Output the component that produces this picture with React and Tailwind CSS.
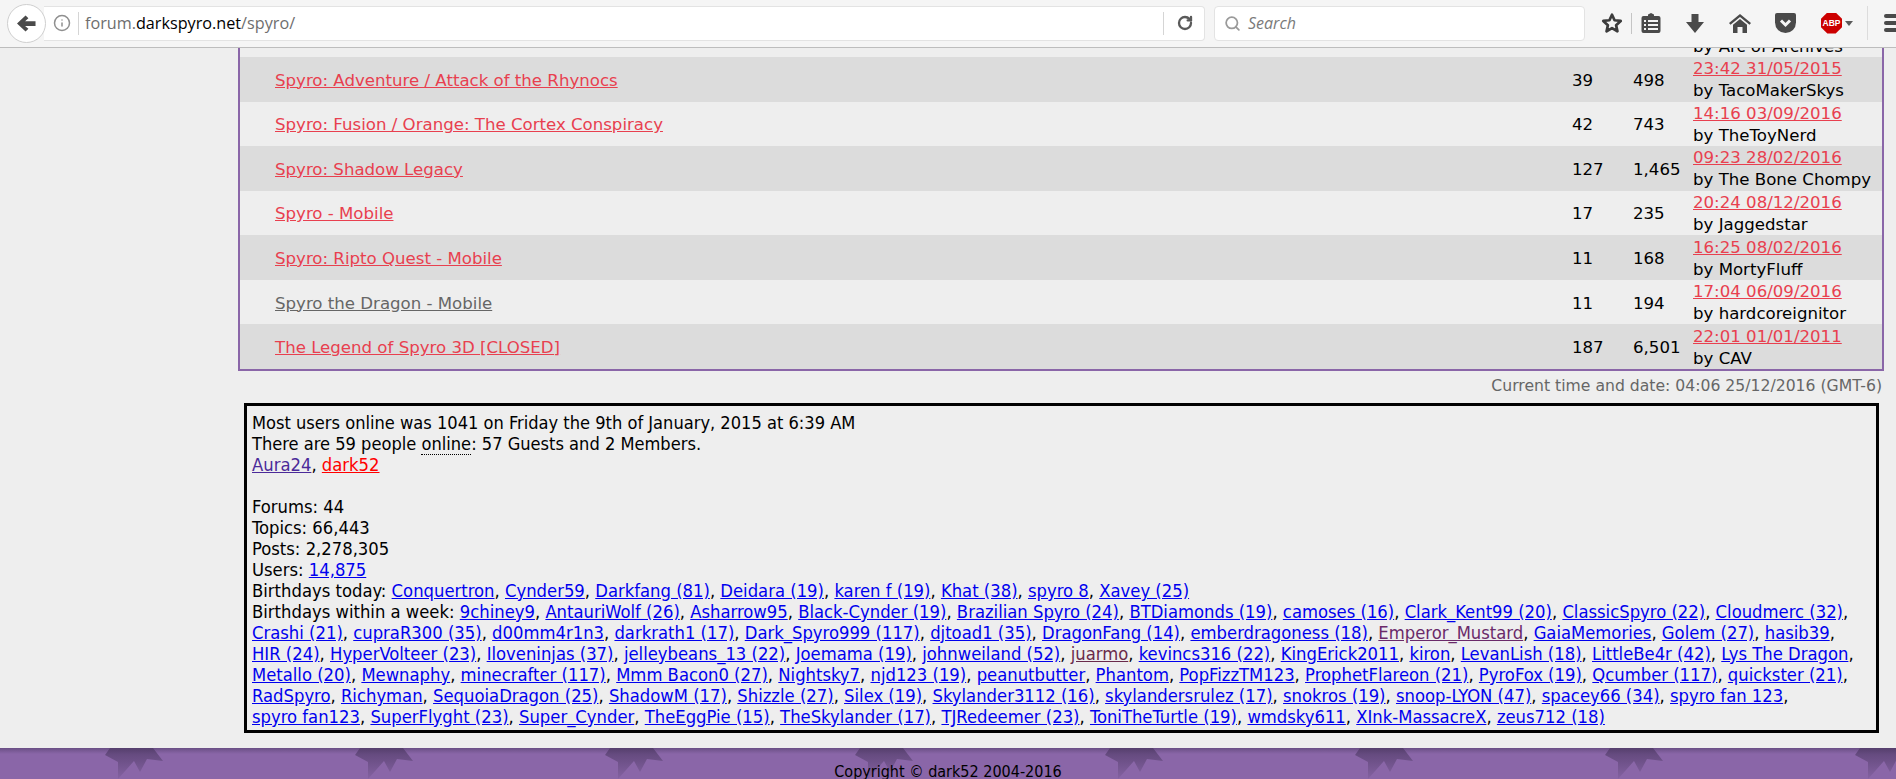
import { Info, Search, RotateCw } from "lucide-react";

const rows = [
  ["", "", "", "", "by Arc of Archives", false],
  ["Spyro: Adventure / Attack of the Rhynocs", "39", "498", "23:42 31/05/2015", "by TacoMakerSkys", true],
  ["Spyro: Fusion / Orange: The Cortex Conspiracy", "42", "743", "14:16 03/09/2016", "by TheToyNerd", false],
  ["Spyro: Shadow Legacy", "127", "1,465", "09:23 28/02/2016", "by The Bone Chompy", true],
  ["Spyro - Mobile", "17", "235", "20:24 08/12/2016", "by Jaggedstar", false],
  ["Spyro: Ripto Quest - Mobile", "11", "168", "16:25 08/02/2016", "by MortyFluff", true],
  ["Spyro the Dragon - Mobile", "11", "194", "17:04 06/09/2016", "by hardcoreignitor", false],
  ["The Legend of Spyro 3D [CLOSED]", "187", "6,501", "22:01 01/01/2011", "by CAV", true],
];

const today = ["Conquertron", "Cynder59", "Darkfang (81)", "Deidara (19)", "karen f (19)", "Khat (38)", "spyro 8", "Xavey (25)"];

const week = [
  ["9chiney9", "AntauriWolf (26)", "Asharrow95", "Black-Cynder (19)", "Brazilian Spyro (24)", "BTDiamonds (19)", "camoses (16)", "Clark_Kent99 (20)", "ClassicSpyro (22)", "Cloudmerc (32)"],
  ["Crashi (21)", "cupraR300 (35)", "d00mm4r1n3", "darkrath1 (17)", "Dark_Spyro999 (117)", "djtoad1 (35)", "DragonFang (14)", "emberdragoness (18)", "Emperor_Mustard", "GaiaMemories", "Golem (27)", "hasib39"],
  ["HIR (24)", "HyperVolteer (23)", "Iloveninjas (37)", "jelleybeans_13 (22)", "Joemama (19)", "johnweiland (52)", "juarmo", "kevincs316 (22)", "KingErick2011", "kiron", "LevanLish (18)", "LittleBe4r (42)", "Lys The Dragon"],
  ["Metallo (20)", "Mewnaphy", "minecrafter (117)", "Mmm Bacon0 (27)", "Nightsky7", "njd123 (19)", "peanutbutter", "Phantom", "PopFizzTM123", "ProphetFlareon (21)", "PyroFox (19)", "Qcumber (117)", "quickster (21)"],
  ["RadSpyro", "Richyman", "SequoiaDragon (25)", "ShadowM (17)", "Shizzle (27)", "Silex (19)", "Skylander3112 (16)", "skylandersrulez (17)", "snokros (19)", "snoop-LYON (47)", "spacey66 (34)", "spyro fan 123"],
  ["spyro fan123", "SuperFlyght (23)", "Super_Cynder", "TheEggPie (15)", "TheSkylander (17)", "TJRedeemer (23)", "ToniTheTurtle (19)", "wmdsky611", "XInk-MassacreX", "zeus712 (18)"],
];

function nameClass(name) {
  if (name === "Emperor_Mustard") return "text-[#6a2a6a] underline";
  if (name === "juarmo") return "text-[#6a2a4a] underline";
  return "text-[#0000ee] underline";
}

function NameList({ names, trailing }) {
  return (
    <>
      {names.map((name, i) => (
        <span key={name}>
          <a className={nameClass(name)}>{name}</a>
          {i < names.length - 1 || trailing ? ", " : ""}
        </span>
      ))}
    </>
  );
}

function Toolbar() {
  return (
    <div className="flex h-12 shrink-0 items-center overflow-hidden border-b border-[#bdbdbd] bg-[#f5f5f5] pb-[1px] pl-[7px]">
      <div className="z-10 flex h-[39px] w-[39px] shrink-0 items-center justify-center rounded-full border border-[#cfcfcf] bg-white">
        <svg viewBox="0 0 20 20" className="h-[19px] w-[19px]" fill="#4a4a4a">
          <path d="M0 10L9 1.500l3 3-3.500 3H19.500v5H8.500l3.500 3-3 3z" />
        </svg>
      </div>
      <div className="-ml-[2px] flex h-[35px] w-[1161px] shrink-0 items-center rounded-r-sm border border-l-0 border-[#e3e3e3] bg-white font-['Open_Sans',sans-serif] text-[16.2px]">
        <Info className="ml-[9px] h-[18px] w-[18px] text-[#8f8f8f]" />
        <div className="ml-[7px] h-[23px] w-px bg-[#d5d5d5]" />
        <span className="ml-[6px] text-[#6e6e6e]">
          forum.<span className="text-black">darkspyro.net</span>/spyro/
        </span>
        <div className="ml-auto flex items-center">
          <div className="h-[23px] w-px bg-[#d5d5d5]" />
          <RotateCw className="ml-[13px] mr-[11px] h-[16px] w-[16px] text-[#5a5a5a]" strokeWidth={3.5} />
        </div>
      </div>
      <div className="ml-[9px] flex h-[35px] w-[371px] shrink-0 items-center rounded-sm border border-[#e3e3e3] bg-white pl-[9px] font-['Open_Sans',sans-serif] text-[16px] italic text-[#7a7a7a]">
        <Search className="h-[17px] w-[17px] text-[#9a9a9a]" strokeWidth={2.5} />
        <span className="ml-[7px]">Search</span>
      </div>
      <svg viewBox="0 0 24 24" className="ml-[16px] h-[22px] w-[22px] shrink-0" fill="none" stroke="#3c3c3c" strokeWidth="3" strokeLinejoin="round">
        <path d="M12 3l2.800 6 6.700.8-5 4.600 1.400 6.600L12 17.600 6.100 21l1.400-6.600-5-4.600 6.700-.8z" />
      </svg>
      <div className="ml-[8px] h-[21px] w-px shrink-0 bg-[#c5c5c5]" />
      <svg viewBox="0 0 20 20" className="ml-[9px] h-[20px] w-[20px] shrink-0">
        <path d="M2.500 3H7V1.500L10 0l3 1.500V3h4.500A2 2 0 0 1 19.500 5v13a2 2 0 0 1-2 2h-15a2 2 0 0 1-2-2V5a2 2 0 0 1 2-2z" fill="#4a4a4a" />
        <path d="M3 7h2v2H3zM7 7h10v2H7zM3 11h2v2H3zM7 11h10v2H7zM3 15h2v2H3zM7 15h10v2H7z" fill="#f5f5f5" />
      </svg>
      <svg viewBox="0 0 18 19" className="ml-[25px] h-[19px] w-[18px] shrink-0" fill="#4a4a4a">
        <path d="M5.500 0h7v8H18l-9 11L0 8h5.500z" />
      </svg>
      <svg viewBox="0 0 22 19" className="ml-[25px] h-[19px] w-[22px] shrink-0" fill="#4a4a4a">
        <path d="M11 0L22 9l-1.500 1.800L11 3 1.500 10.800 0 9z" />
        <path d="M11 5l7 5.700V19h-4.500v-6h-5v6H4v-8.300z" />
      </svg>
      <svg viewBox="0 0 21 20" className="ml-[24px] h-[20px] w-[21px] shrink-0">
        <path d="M2 0h17a2 2 0 0 1 2 2v7.500a10.500 10.500 0 0 1-21 0V2a2 2 0 0 1 2-2z" fill="#4a4a4a" />
        <path d="M6 7.500l4.500 4.500L15 7.500" fill="none" stroke="#f5f5f5" strokeWidth="3" />
      </svg>
      <div className="ml-[25px] flex h-[21px] w-[21px] shrink-0 items-center justify-center bg-[#cc0000] font-['Liberation_Sans',sans-serif] text-[8.5px] font-bold leading-none text-white [clip-path:polygon(30%_0,70%_0,100%_30%,100%_70%,70%_100%,30%_100%,0_70%,0_30%)]">
        ABP
      </div>
      <div className="ml-[3px] h-0 w-0 shrink-0 border-x-[4.5px] border-t-[5px] border-x-transparent border-t-[#5a5a5a]" />
      <div className="ml-[14px] h-[34px] w-px shrink-0 bg-[#dcdcdc]" />
      <div className="ml-[16px] flex w-[20px] shrink-0 flex-col gap-[3px]">
        <div className="h-[4px] rounded-sm bg-[#4a4a4a]" />
        <div className="h-[4px] rounded-sm bg-[#4a4a4a]" />
        <div className="h-[4px] rounded-sm bg-[#4a4a4a]" />
      </div>
    </div>
  );
}

function ForumRow({ row }) {
  const [title, topics, posts, date, by, dark] = row;
  const grey = title === "Spyro the Dragon - Mobile";
  return (
    <div className={`flex h-[44.57px] items-center pt-[2px] ${dark ? "bg-[#dcdcdc]" : "bg-[#eeeeee]"}`}>
      <a className={`ml-[35px] flex-1 underline ${grey ? "text-[#666666]" : "text-[#e8404f]"}`}>{title}</a>
      <div className="w-[61px]">{topics}</div>
      <div className="w-[60px]">{posts}</div>
      <div className="w-[189px] leading-[22px]">
        <a className="block text-[#e8404f] underline">{date || "\u00A0"}</a>
        <div>{by}</div>
      </div>
    </div>
  );
}

function Dragon() {
  return (
    <svg viewBox="0 0 58 31" className="h-[31px] w-[58px]">
      <defs>
        <linearGradient id="dragonFade" x1="0" y1="0" x2="0" y2="1">
          <stop offset="0" stopColor="#4f3a66" stopOpacity="0.75" />
          <stop offset="1" stopColor="#4f3a66" stopOpacity="0.1" />
        </linearGradient>
      </defs>
      <path d="M0 7L5 0H48L58 13 42 11 35 24 29 13 13 31V14z" fill="url(#dragonFade)" />
    </svg>
  );
}

export default function App() {
  return (
    <div className="flex h-[779px] flex-col overflow-hidden bg-[#eeeeee] font-['DejaVu_Sans_Condensed','DejaVu_Sans',sans-serif] text-[18.27px] leading-[21px] text-black">
      <Toolbar />
      <div className="min-h-0 flex-1 overflow-hidden">
        <div className="ml-[238px] w-[1646px]">
          <div className="-mt-[35.57px] border-x-2 border-b-2 border-[#8a66a8] font-['DejaVu_Sans',sans-serif] text-[16.6px]">
            {rows.map((row, i) => (
              <ForumRow key={i} row={row} />
            ))}
          </div>
          <div className="pr-[2px] pt-[4px] text-right font-['DejaVu_Sans',sans-serif] text-[15.65px] text-[#666666]">
            Current time and date: 04:06 25/12/2016 (GMT-6)
          </div>
          <div className="ml-[6px] mr-[5px] mt-[7px] border-[3px] border-black pb-[3px] pl-[5px] pt-[6px]">
            <div className="text-[18.1px]">Most users online was 1041 on Friday the 9th of January, 2015 at 6:39 AM</div>
            <div className="text-[18.1px]">
              There are 59 people <span className="border-b border-dotted border-black">online</span>: 57 Guests and 2 Members.
            </div>
            <div>
              <a className="text-[#4b2a99] underline">Aura24</a>, <a className="text-[#ff0000] underline">dark52</a>
            </div>
            <div className="h-[21px]" />
            <div>Forums: 44</div>
            <div>Topics: 66,443</div>
            <div>Posts: 2,278,305</div>
            <div>
              Users: <a className="text-[#0000ee] underline">14,875</a>
            </div>
            <div>
              Birthdays today: <NameList names={today} />
            </div>
            {week.map((line, i) => (
              <div key={i} className="whitespace-nowrap">
                {i === 0 ? "Birthdays within a week: " : ""}
                <NameList names={line} trailing={i < week.length - 1} />
              </div>
            ))}
          </div>
        </div>
      </div>
      <div className="relative h-[31px] shrink-0 overflow-hidden bg-[linear-gradient(#6a4f85,#8a66a8_6px)] pt-[13px] text-center text-[16px] leading-[21px] text-black">
        <div className="absolute inset-0 flex pl-[105px]">
          {Array.from({ length: 8 }).map((_, i) => (
            <div key={i} className="w-[250px] shrink-0">
              <Dragon />
            </div>
          ))}
        </div>
        <span className="relative">Copyright © dark52 2004-2016</span>
      </div>
    </div>
  );
}
